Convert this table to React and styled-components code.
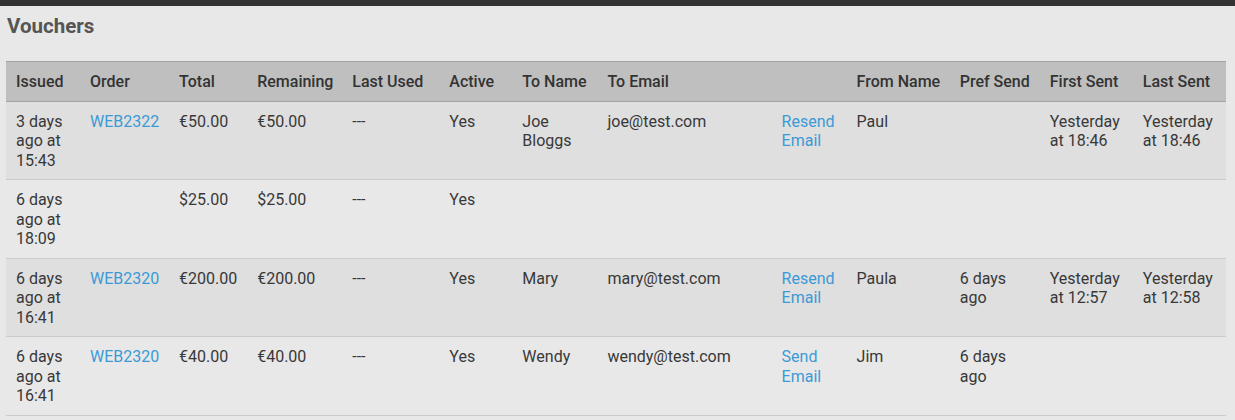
import React from 'react'
import styled, { createGlobalStyle } from 'styled-components'

const GlobalStyle = createGlobalStyle`
  body {
    margin: 0;
    background: #e8e8e8;
    font-family: Roboto, "Liberation Sans", sans-serif;
    color: #333;
  }
`

const columns = [
  { key: 'issued', label: 'Issued', width: 74 },
  { key: 'order', label: 'Order', width: 89, link: true },
  { key: 'total', label: 'Total', width: 78 },
  { key: 'remaining', label: 'Remaining', width: 95 },
  { key: 'lastUsed', label: 'Last Used', width: 97 },
  { key: 'active', label: 'Active', width: 73 },
  { key: 'toName', label: 'To Name', width: 85 },
  { key: 'toEmail', label: 'To Email', width: 174 },
  { key: 'action', label: '', width: 75, link: true },
  { key: 'fromName', label: 'From Name', width: 103 },
  { key: 'prefSend', label: 'Pref Send', width: 90 },
  { key: 'firstSent', label: 'First Sent', width: 93 },
  { key: 'lastSent', label: 'Last Sent', width: 93 }
]

const vouchers = [
  {
    issued: '3 days ago at 15:43', order: 'WEB2322', total: '€50.00', remaining: '€50.00',
    lastUsed: '---', active: 'Yes', toName: 'Joe Bloggs', toEmail: 'joe@test.com',
    action: 'Resend Email', fromName: 'Paul', prefSend: '',
    firstSent: 'Yesterday at 18:46', lastSent: 'Yesterday at 18:46'
  },
  {
    issued: '6 days ago at 18:09', order: '', total: '$25.00', remaining: '$25.00',
    lastUsed: '---', active: 'Yes', toName: '', toEmail: '',
    action: '', fromName: '', prefSend: '', firstSent: '', lastSent: ''
  },
  {
    issued: '6 days ago at 16:41', order: 'WEB2320', total: '€200.00', remaining: '€200.00',
    lastUsed: '---', active: 'Yes', toName: 'Mary', toEmail: 'mary@test.com',
    action: 'Resend Email', fromName: 'Paula', prefSend: '6 days ago',
    firstSent: 'Yesterday at 12:57', lastSent: 'Yesterday at 12:58'
  },
  {
    issued: '6 days ago at 16:41', order: 'WEB2320', total: '€40.00', remaining: '€40.00',
    lastUsed: '---', active: 'Yes', toName: 'Wendy', toEmail: 'wendy@test.com',
    action: 'Send Email', fromName: 'Jim', prefSend: '6 days ago',
    firstSent: '', lastSent: ''
  }
]

const App = () => (
  <>
    <GlobalStyle />
    <TopBar />
    <Page>
      <Title>Vouchers</Title>
      <Table>
        <colgroup>
          {columns.map((col) => (
            <col key={col.key} style={{ width: col.width }} />
          ))}
        </colgroup>
        <thead>
          <HeadRow>
            {columns.map((col) => (
              <HeadCell key={col.key}>{col.label}</HeadCell>
            ))}
          </HeadRow>
        </thead>
        <tbody>
          {vouchers.map((voucher, i) => (
            <Row key={i} $striped={i % 2 === 0}>
              {columns.map((col) => (
                <Cell key={col.key}>
                  {col.link && voucher[col.key]
                    ? <Link href='#'>{voucher[col.key]}</Link>
                    : voucher[col.key]}
                </Cell>
              ))}
            </Row>
          ))}
        </tbody>
      </Table>
    </Page>
  </>
)

const TopBar = styled.div`
  height: 6px;
  background: #333;
`

const Page = styled.div`
  padding: 8px 9px 0 6px;
`

const Title = styled.h2`
  margin: 0 0 22px 1px;
  font-size: 20.5px;
  line-height: 25px;
  font-weight: 700;
  color: #555;
`

const Table = styled.table`
  width: 1220px;
  table-layout: fixed;
  border-collapse: collapse;
  font-size: 16px;
  line-height: 19.5px;
`

const HeadRow = styled.tr`
  background: #bfbfbf;
  border-top: 1px solid #a3a3a3;
  border-bottom: 1px solid #a3a3a3;
`

const HeadCell = styled.th`
  padding: 10px 10px 9px;
  text-align: left;
  font-weight: 500;
  color: #333;
  white-space: nowrap;
`

const Row = styled.tr`
  background: ${({ $striped }) => ($striped ? '#dfdfdf' : '#e8e8e8')};
  border-bottom: 1px solid #cbcbcb;
`

const Cell = styled.td`
  padding: 10px 10px 9px;
  vertical-align: top;
  color: #383838;
`

const Link = styled.a`
  color: #3b9ad6;
  text-decoration: none;
`

export default App
